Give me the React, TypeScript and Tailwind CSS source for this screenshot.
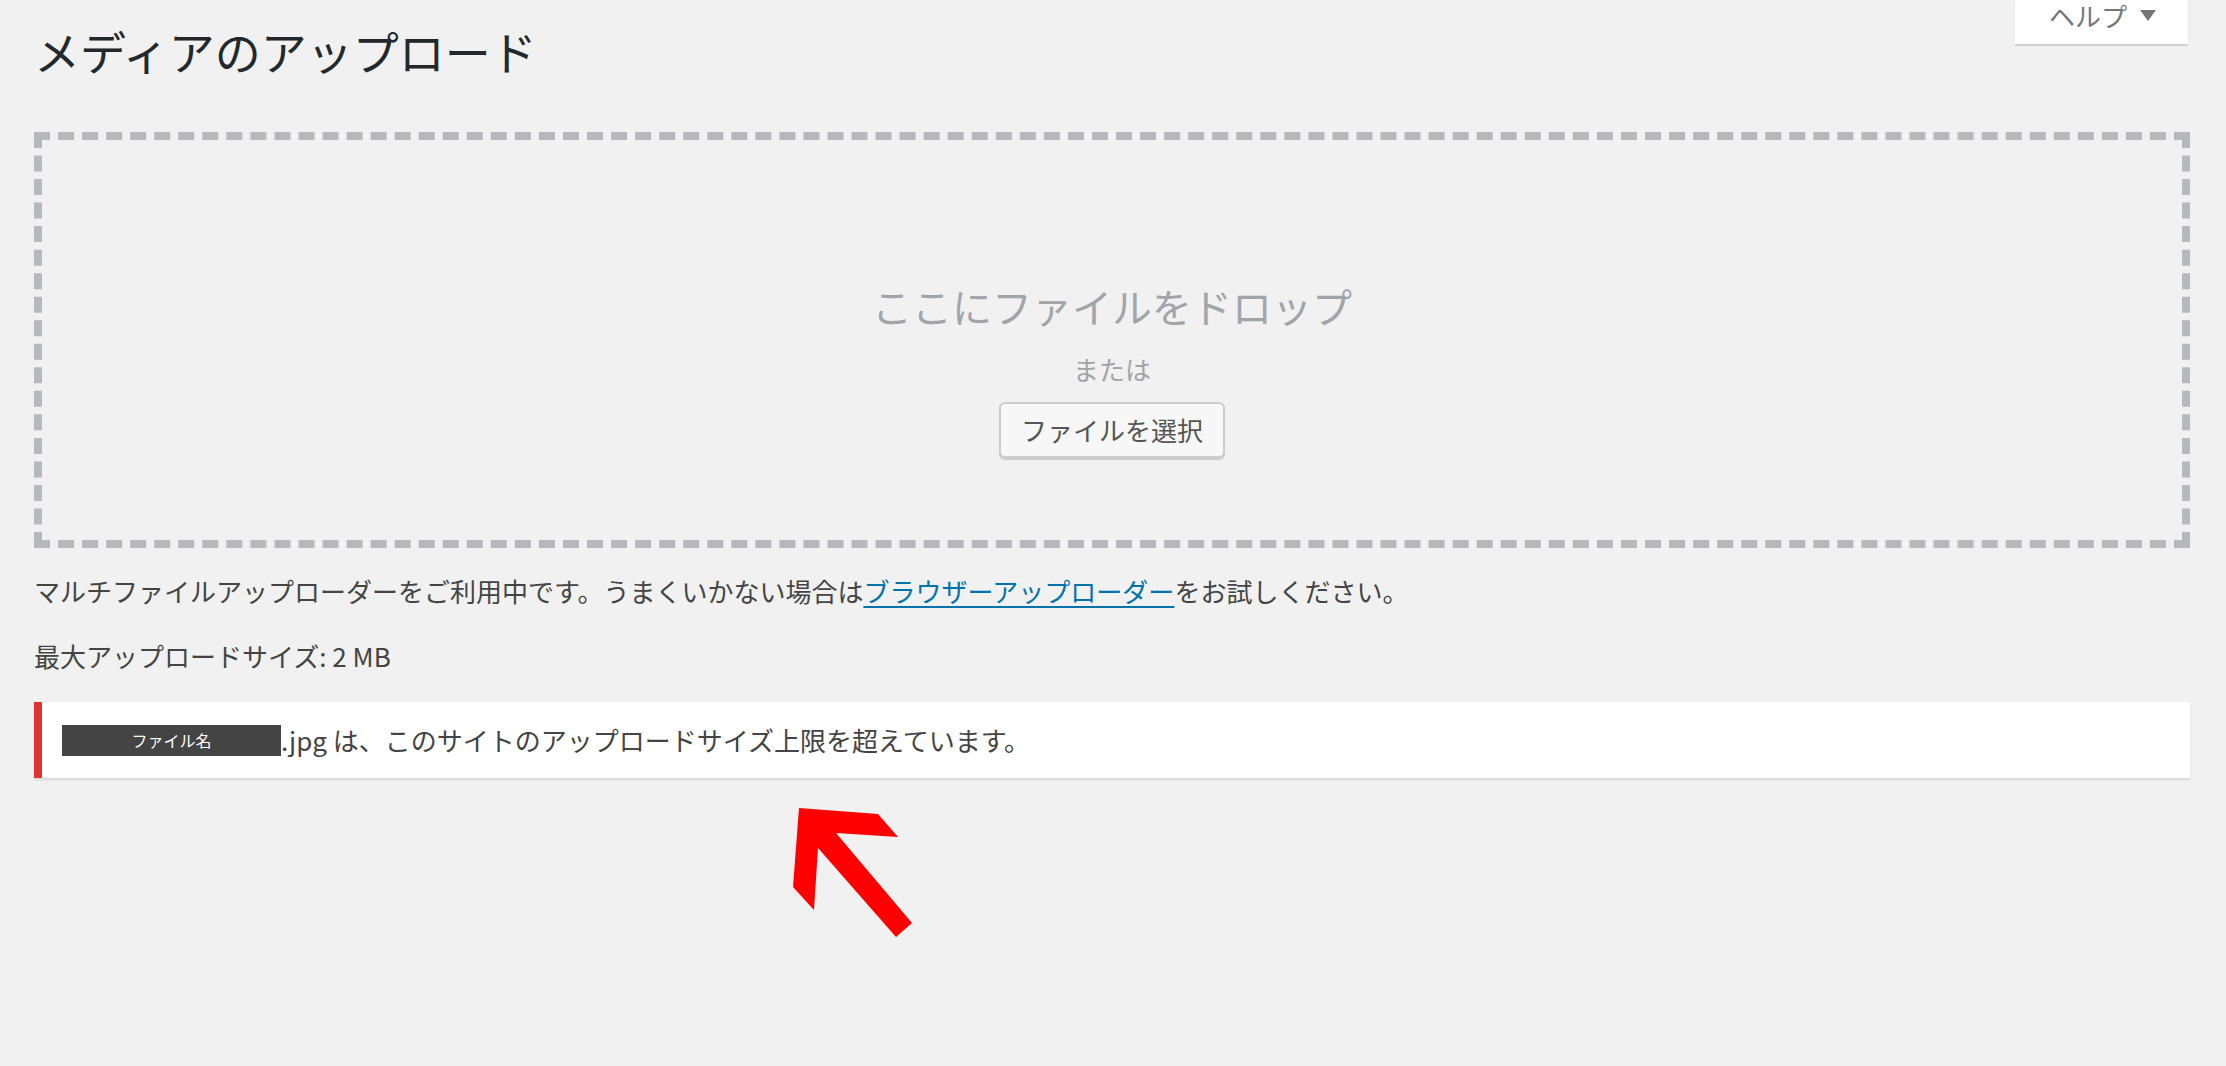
import React from "react";

export default function App() {
  return (
    <div
      className="relative w-[2226px] h-[1066px] overflow-hidden bg-[#f1f1f1] pl-[34px] pr-[36px] text-[#444]"
      style={{ fontFamily: '"Noto Sans CJK JP", "Noto Sans", sans-serif' }}
    >
      <div className="flex items-start justify-between">
        <h1 className="mt-[27px] text-[46px] leading-[46px] font-normal text-[#23282d]">
          メディアのアップロード
        </h1>
        <button className="mr-[2px] flex h-[44px] w-[173px] items-start bg-white pl-[34px] pt-[3px] text-[26px] leading-[26px] text-[#72777c] shadow-[0_2px_1px_rgba(0,0,0,0.13)]">
          <span>ヘルプ</span>
          <span className="ml-[13px] mt-[7px] h-0 w-0 border-l-[8px] border-r-[8px] border-t-[11px] border-l-transparent border-r-transparent border-t-[#72777c]" />
        </button>
      </div>

      <div className="mt-[59px] flex h-[416px] flex-col items-center border-[8px] border-dashed border-[#b4b9be]">
        <div className="mt-[146px] text-[40px] leading-[40px] text-[#a0a5aa]">
          ここにファイルをドロップ
        </div>
        <div className="mt-[30px] text-[26px] leading-[26px] text-[#a0a5aa]">または</div>
        <button className="mt-[20px] flex h-[56px] items-center rounded-[6px] border-2 border-[#cccccc] bg-[#f7f7f7] px-[20px] text-[26px] leading-[26px] text-[#555] shadow-[0_2px_0_#cccccc]">
          ファイルを選択
        </button>
      </div>

      <p className="mt-[30px] text-[26px] leading-[26px]">
        マルチファイルアップローダーをご利用中です。うまくいかない場合は
        <a className="text-[#0073aa] underline decoration-2 underline-offset-4" href="#">
          ブラウザーアップローダー
        </a>
        をお試しください。
      </p>
      <p className="mt-[39px] text-[26px] leading-[26px]">最大アップロードサイズ: 2 MB</p>

      <div className="mt-[33px] flex h-[76px] items-center border-l-[8px] border-[#dc3232] bg-white pl-[20px] shadow-[0_2px_2px_rgba(0,0,0,0.1)]">
        <span className="flex h-[31px] w-[219px] items-center justify-center bg-[#444] text-[16px] leading-[16px] text-white">
          ファイル名
        </span>
        <span className="text-[26px] leading-[26px] text-[#444]">
          .jpg は、このサイトのアップロードサイズ上限を超えています。
        </span>
      </div>

      <svg
        className="pointer-events-none absolute left-0 top-0"
        width="2226"
        height="1066"
        viewBox="0 0 2226 1066"
      >
        <polygon
          points="799,808 878,814 898,837 836,833 912,923 896,937 818,848 814,910 793,887"
          fill="#ff0000"
        />
      </svg>
    </div>
  );
}
